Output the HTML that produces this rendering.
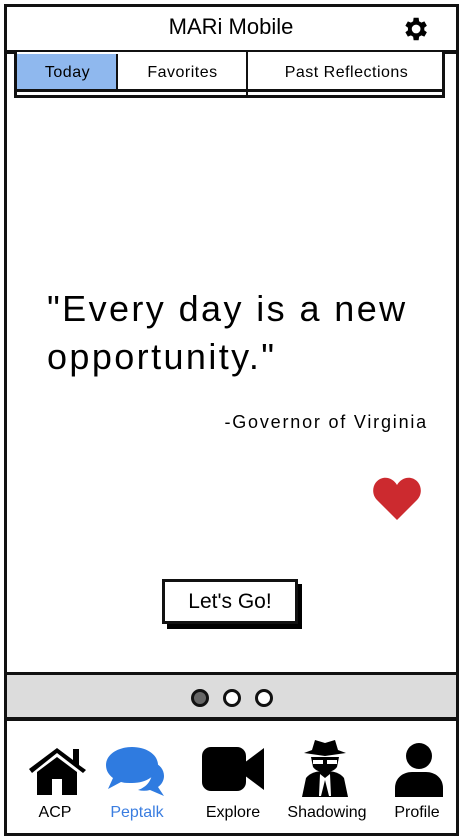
<!DOCTYPE html>
<html><head><style>
*{margin:0;padding:0;box-sizing:border-box}
body{width:462px;height:838px;background:#fff;position:relative;overflow:hidden;font-family:"Liberation Sans",sans-serif;color:#000}
.a{position:absolute}
</style></head><body>
<div class="a" style="left:4px;top:4px;width:455px;height:832px;border:3px solid #111;background:#fff"></div>
<div class="a" style="left:4px;top:4px;width:455px;height:50px;border:3px solid #111;border-bottom-width:4px;background:#fff"></div>
<div class="a" style="left:0;top:14px;width:462px;text-align:center;font-size:22px;">MARi Mobile</div>
<svg class="a" style="left:400px;top:14px" width="30" height="30" viewBox="0 0 24 24"><path fill="#000" d="M19.4 13a7.5 7.5 0 0 0 0-2l2.1-1.6-2-3.5-2.5 1a7.4 7.4 0 0 0-1.7-1L14.9 3h-4l-.4 2.9a7.4 7.4 0 0 0-1.7 1l-2.5-1-2 3.5L6.4 11a7.5 7.5 0 0 0 0 2l-2.1 1.6 2 3.5 2.5-1a7.4 7.4 0 0 0 1.7 1l.4 2.9h4l.4-2.9a7.4 7.4 0 0 0 1.7-1l2.5 1 2-3.5zM12.9 15.5a3.5 3.5 0 1 1 0-7 3.5 3.5 0 0 1 0 7z"/></svg>
<!-- tabs -->
<div class="a" style="left:14px;top:52px;width:431px;height:46px;border:3px solid #111;border-top:none;background:#fff"></div>
<div class="a" style="left:17px;top:54px;width:101px;height:36px;background:#8fb8ee;border-right:2px solid #111"></div>
<div class="a" style="left:246px;top:52px;width:2px;height:46px;background:#111"></div>
<div class="a" style="left:17px;top:89px;width:428px;height:3px;background:#111"></div>
<div class="a" style="left:17px;top:64px;width:101px;text-align:center;font-size:16px;letter-spacing:.5px">Today</div>
<div class="a" style="left:119px;top:64px;width:127px;text-align:center;font-size:16px;letter-spacing:.5px">Favorites</div>
<div class="a" style="left:248px;top:64px;width:197px;text-align:center;font-size:16px;letter-spacing:.5px">Past Reflections</div>
<!-- quote -->
<div class="a" style="left:47px;top:285px;width:410px;font-size:36px;line-height:48px;letter-spacing:2.4px">"Every day is a new opportunity."</div>
<div class="a" style="left:180px;top:412px;width:248px;text-align:right;font-size:18px;letter-spacing:1.8px">-Governor of Virginia</div>
<svg class="a" style="left:372px;top:476px" width="50" height="44" viewBox="0 0 50 44"><path fill="#cc2a2f" d="M25 44L5 24C-2 17 1 4 11 2c6-1 11 2 14 7 3-5 8-8 14-7 10 2 13 15 6 22z"/></svg>
<!-- button -->
<div class="a" style="left:167px;top:584px;width:135px;height:45px;background:#000"></div>
<div class="a" style="left:162px;top:579px;width:136px;height:45px;border:3px solid #111;background:#fff;text-align:center;font-size:21px;line-height:39px">Let's Go!</div>
<!-- gray bar -->
<div class="a" style="left:4px;top:672px;width:455px;height:49px;border:3px solid #111;border-bottom-width:4px;background:#dcdcdc"></div>
<div class="a" style="left:191px;top:689px;width:18px;height:18px;border-radius:50%;border:3px solid #111;background:#666"></div>
<div class="a" style="left:223px;top:689px;width:18px;height:18px;border-radius:50%;border:3px solid #111;background:#fff"></div>
<div class="a" style="left:255px;top:689px;width:18px;height:18px;border-radius:50%;border:3px solid #111;background:#fff"></div>
<!-- nav icons -->
<svg class="a" style="left:27px;top:745px" width="60" height="50" viewBox="0 0 60 50"><path fill="#000" d="M2 24L30 3l16 12V4h6v16l7 5-3 3L30 8 5 28z"/><path fill="#000" d="M10 27L30 12l20 15v23H35V34H25v16H10z"/></svg>
<svg class="a" style="left:104px;top:745px" width="66" height="54" viewBox="0 0 66 54"><path fill="#2f7be0" d="M34 14c14 0 26 6 26 17 0 5-3 9-6 11l6 9-14-6c-4 1-8 1-12 0 9-3 14-10 14-18 0-5-4-10-9-13z"/><path fill="#2f7be0" d="M28 2C13 2 2 10 2 20c0 6 3 10 7 13l-5 11 13-7c3 1 7 1 11 1 15 0 26-8 26-18S43 2 28 2z"/></svg>
<svg class="a" style="left:200px;top:745px" width="66" height="48" viewBox="0 0 66 48"><rect x="2" y="2" width="44" height="44" rx="9" fill="#000"/><path fill="#000" d="M44 18L64 3v42L44 30z"/></svg>
<svg class="a" style="left:298px;top:738px" width="54" height="60" viewBox="0 0 54 60"><path fill="#000" d="M14 12l3-10 10 3 10-3 3 10 8 3-21 3-21-3z"/><path fill="#000" d="M13 19h28l-2 10c-3 4-7 5-12 5s-9-1-12-5z"/><rect x="15" y="22" width="10" height="4" fill="#fff"/><rect x="29" y="22" width="10" height="4" fill="#fff"/><path fill="#000" d="M8 40c4-5 10-7 19-7s15 2 19 7l4 19H4z"/><path fill="#fff" d="M22 36l5 4 5-4 1 22h-2l-4-16-4 16h-2z"/></svg>
<svg class="a" style="left:392px;top:742px" width="54" height="56" viewBox="0 0 54 56"><circle cx="27" cy="14" r="13" fill="#000"/><path fill="#000" d="M3 55V46c0-10 8-16 17-16h14c9 0 17 6 17 16v9z"/></svg>
<div class="a" style="left:26px;top:804px;width:58px;text-align:center;font-size:16px">ACP</div>
<div class="a" style="left:100px;top:804px;width:74px;text-align:center;font-size:16px;color:#3a7de0">Peptalk</div>
<div class="a" style="left:196px;top:804px;width:74px;text-align:center;font-size:16px">Explore</div>
<div class="a" style="left:278px;top:804px;width:98px;text-align:center;font-size:16px">Shadowing</div>
<div class="a" style="left:382px;top:804px;width:70px;text-align:center;font-size:16px">Profile</div>
</body></html>
